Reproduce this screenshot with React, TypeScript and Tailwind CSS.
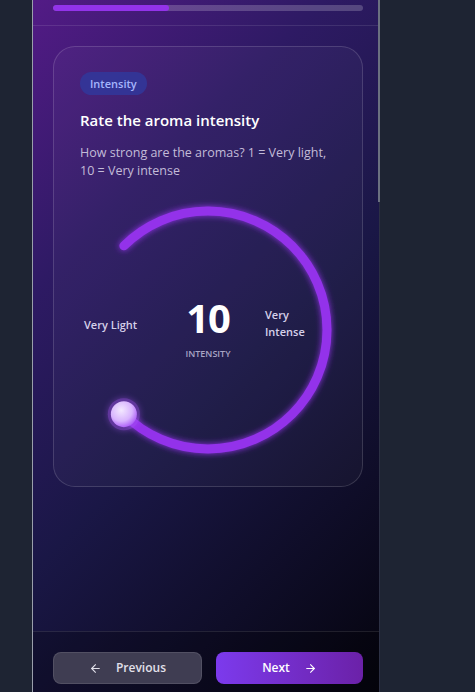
import { ArrowLeft, ArrowRight } from 'lucide-react'

const font = { fontFamily: '"Open Sans", "Noto Sans", sans-serif' }

function Dial() {
  return (
    <div className="relative h-[260px] w-full">
      <svg
        width="260"
        height="260"
        viewBox="0 0 260 260"
        className="absolute left-1/2 top-0 -translate-x-1/2 overflow-visible"
      >
        <defs>
          <filter id="glow" x="-20%" y="-20%" width="140%" height="140%">
            <feGaussianBlur stdDeviation="3" result="b" />
            <feMerge>
              <feMergeNode in="b" />
              <feMergeNode in="SourceGraphic" />
            </feMerge>
          </filter>
          <radialGradient id="knob" cx="40%" cy="35%" r="70%">
            <stop offset="0%" stopColor="#f3e8ff" />
            <stop offset="60%" stopColor="#d8b4fe" />
            <stop offset="100%" stopColor="#a855f7" />
          </radialGradient>
        </defs>
        <path
          d="M 45.85 45.85 A 119 119 0 1 1 45.85 214.15"
          fill="none"
          stroke="#9333ea"
          strokeWidth="9"
          strokeLinecap="round"
          filter="url(#glow)"
        />
        <circle cx="45.85" cy="214.15" r="16" fill="#a855f7" opacity="0.45" filter="url(#glow)" />
        <circle cx="45.85" cy="214.15" r="13" fill="url(#knob)" />
      </svg>

      <div className="absolute left-[4px] top-[117px] text-[11px] font-semibold text-[#d6d1ea]">
        Very Light
      </div>
      <div className="absolute left-[185px] top-[106px] text-[11px] font-semibold leading-[17px] text-[#d6d1ea]">
        Very
        <br />
        Intense
      </div>
      <div className="absolute left-0 right-0 top-[94px] flex flex-col items-center">
        <div className="text-[40px] font-bold leading-[48px] tracking-tight text-white">10</div>
        <div className="mt-[5px] text-[9px] font-semibold uppercase text-[#a9a5c4]">Intensity</div>
      </div>
    </div>
  )
}

export default function App() {
  return (
    <div className="h-[692px] w-full overflow-hidden bg-[#1e2433]" style={font}>
      <div className="relative ml-[32px] flex h-[692px] w-[348px] flex-col border-l border-r border-l-[#9a9fab] border-r-[#2c3044] bg-[linear-gradient(135deg,#531b86_0%,#2e1a64_28%,#1a1746_55%,#05040d_100%)]">
        <div className="absolute right-[-1px] top-0 h-[202px] w-[2px] bg-[#6b7080]" />

        <div className="border-b border-white/10 pb-[14px] pl-5 pr-4 pt-[5px]">
          <div className="h-[6px] w-full overflow-hidden rounded-full bg-white/20">
            <div className="h-full w-[37.5%] rounded-full bg-[#9333ea]" />
          </div>
        </div>

        <div className="flex-1 pl-5 pr-4 pt-5">
          <div className="rounded-[22px] border border-white/15 bg-white/[0.03] px-[26px] pb-[26px] pt-[23px]">
            <span className="inline-block rounded-full bg-[#2f3a9e]/80 px-[10px] py-[4px] text-[11px] font-semibold leading-[15px] text-[#a5b4fc]">
              Intensity
            </span>
            <h2 className="mt-[15px] text-[15px] font-semibold leading-[20px] text-white">
              Rate the aroma intensity
            </h2>
            <p className="mt-[14px] text-[12.5px] leading-[18px] text-[#c3bcd8]">
              How strong are the aromas? 1 = Very light, 10 = Very intense
            </p>
            <div className="mt-[20px]">
              <Dial />
            </div>
          </div>
        </div>

        <div className="border-t border-white/10 bg-black/20 pl-5 pr-4 pb-2 pt-5">
          <div className="flex gap-[14px]">
            <button className="flex h-[32px] flex-1 items-center justify-center gap-[14px] rounded-lg border border-white/10 bg-[#3f3d52] text-[12px] font-semibold text-[#e2e0ea]">
              <ArrowLeft size={13} strokeWidth={2} />
              Previous
            </button>
            <button className="flex h-[32px] flex-1 items-center justify-center gap-[14px] rounded-lg bg-gradient-to-r from-[#7c3aed] to-[#6b21a8] text-[12px] font-semibold text-white">
              Next
              <ArrowRight size={13} strokeWidth={2} />
            </button>
          </div>
        </div>
      </div>
    </div>
  )
}
